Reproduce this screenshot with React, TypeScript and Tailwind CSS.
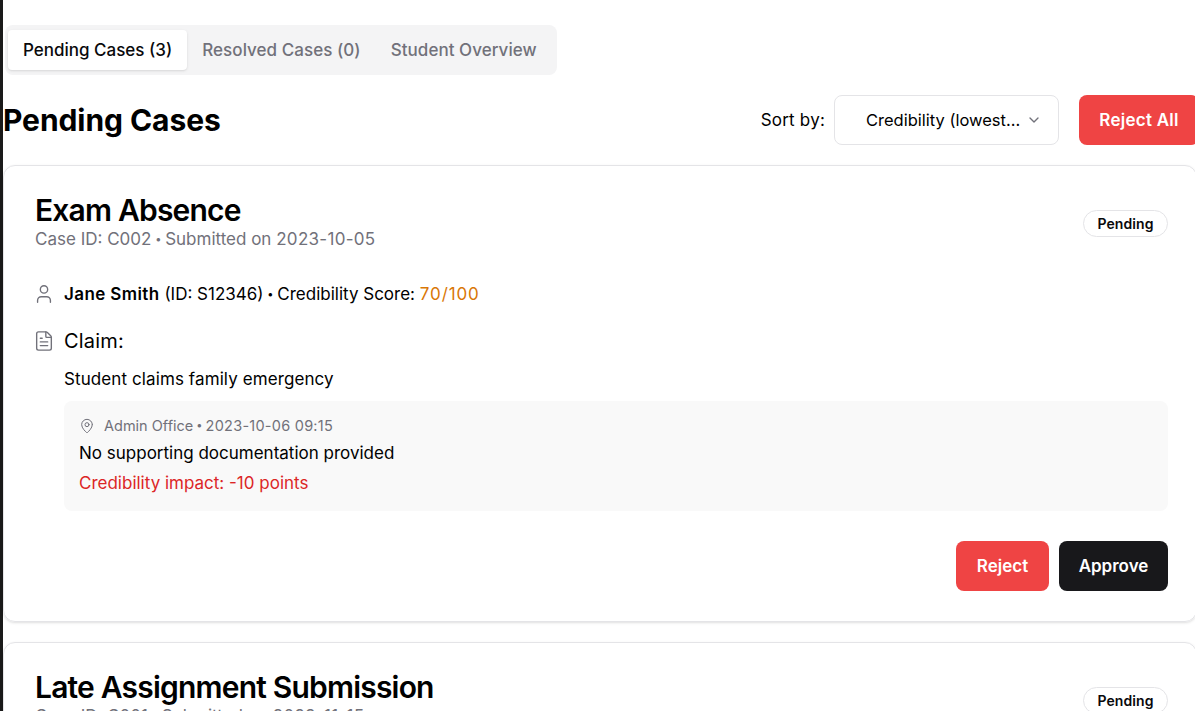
import { ChevronDown, FileText, MapPin, User } from 'lucide-react';

function Dot() {
  return <span className="mx-[-1px] align-[2px] text-[11px] leading-none">•</span>;
}

function Tab({ label, active }: { label: string; active?: boolean }) {
  return (
    <button
      className={
        active
          ? 'flex h-10 items-center justify-center rounded-[4px] bg-white px-[15px] pt-[2px] text-[17px] font-medium text-[#09090b] shadow-sm'
          : 'flex h-10 items-center justify-center px-[15px] pt-[2px] text-[17px] font-medium tracking-[0.05px] text-[#71717a]'
      }
    >
      {label}
    </button>
  );
}

function CaseHeader({ title, id, date }: { title: string; id: string; date: string }) {
  return (
    <div className="flex items-start justify-between">
      <div>
        <h3 className="text-[30px] leading-[36px] font-semibold tracking-[-0.8px] text-black">{title}</h3>
        <p className="-mb-[2px] text-[17px] leading-[22px] text-[#71717a]">
          Case ID: {id} <Dot /> Submitted on <span className="tracking-[0.3px]">{date}</span>
        </p>
      </div>
      <span className="mt-[18px] flex h-[27px] w-[85px] items-center justify-center rounded-full border border-[#e4e4e7] text-[14px] font-semibold tracking-[0.1px] text-[#09090b]">
        Pending
      </span>
    </div>
  );
}

export default function App() {
  return (
    <div className="flex h-[711px] w-[1195px] overflow-hidden bg-white font-['Inter',sans-serif] text-black">
      <div className="w-[3px] shrink-0 bg-[#1a1a1a]" />
      <main className="w-[1194px] shrink-0 pt-[25px]">
        <div className="ml-[2px] flex h-[50px] w-[552px] items-center rounded-lg bg-[#f4f4f5] pl-[3px]">
          <Tab label="Pending Cases (3)" active />
          <Tab label="Resolved Cases (0)" />
          <Tab label="Student Overview" />
        </div>

        <div className="mt-5 -mr-[2px] flex h-[50px] items-center justify-between">
          <h2 className="text-[30px] font-bold tracking-[-0.07px]">Pending Cases</h2>
          <div className="flex items-center">
            <span className="pt-[2px] text-[17px] tracking-[0.2px]">Sort by:</span>
            <div className="ml-[9px] flex h-[50px] w-[225px] items-center justify-between rounded-lg border border-[#e4e4e7] pl-[31px] pr-[16px] text-[16.5px]">
              <span className="truncate pt-px">Credibility (lowest…</span>
              <ChevronDown size={16} className="shrink-0 text-[#71717a]" />
            </div>
            <button className="ml-5 h-[50px] w-[120px] rounded-lg bg-[#ef4444] pt-[2px] text-[17px] font-semibold tracking-[0.25px] text-white">
              Reject All
            </button>
          </div>
        </div>

        <section className="mt-5 h-[457px] rounded-xl border border-[#e4e4e7] pl-[31px] pr-[28px] pt-[26px] shadow-sm">
          <CaseHeader title="Exam Absence" id="C002" date="2023-10-05" />

          <div className="mt-[34px] -ml-[2px] flex items-center gap-[9px] text-[17px] leading-[24px]">
            <User size={22} strokeWidth={1.5} className="text-[#71717a]" />
            <p>
              <span className="font-semibold tracking-[0.4px]">Jane Smith</span> (ID: S12346) <Dot /> Credibility Score:{' '}
              <span className="tracking-[0.9px] text-[#d97706]">70/100</span>
            </p>
          </div>

          <div className="mt-[21px] -ml-[2px] flex items-center gap-[9px]">
            <FileText size={22} strokeWidth={1.5} className="text-[#71717a]" />
            <h4 className="text-[20px] leading-[28px] tracking-[0.2px]">Claim:</h4>
          </div>

          <div className="ml-[29px]">
            <p className="mt-[12px] text-[17px] leading-[24px] tracking-[0.1px]">Student claims family emergency</p>
            <div className="mt-[10px] h-[110px] rounded-lg bg-[#f9f9f9] px-[15px] pt-[15px]">
              <div className="flex items-center gap-[9px] text-[14.5px] leading-[20px] text-[#71717a]">
                <MapPin size={16} strokeWidth={1.5} />
                <span>
                  Admin Office <Dot /> <span className="tracking-[0.25px]">2023-10-06 09:15</span>
                </span>
              </div>
              <p className="mt-[5px] text-[17px] leading-[24px]">No supporting documentation provided</p>
              <p className="mt-[6px] text-[17px] leading-[24px] text-[#dc2626]">Credibility impact: -10 points</p>
            </div>
          </div>

          <div className="mt-[30px] flex justify-end gap-[10px]">
            <button className="h-[50px] w-[93px] rounded-lg bg-[#ef4444] pt-px text-[17px] font-semibold text-white">Reject</button>
            <button className="h-[50px] w-[109px] rounded-lg bg-[#18181b] pt-px text-[17px] font-semibold text-white">Approve</button>
          </div>
        </section>

        <section className="mt-5 h-[300px] rounded-xl border border-[#e4e4e7] pl-[31px] pr-[28px] pt-[26px] shadow-sm">
          <CaseHeader title="Late Assignment Submission" id="C001" date="2023-11-15" />
        </section>
      </main>
    </div>
  );
}
